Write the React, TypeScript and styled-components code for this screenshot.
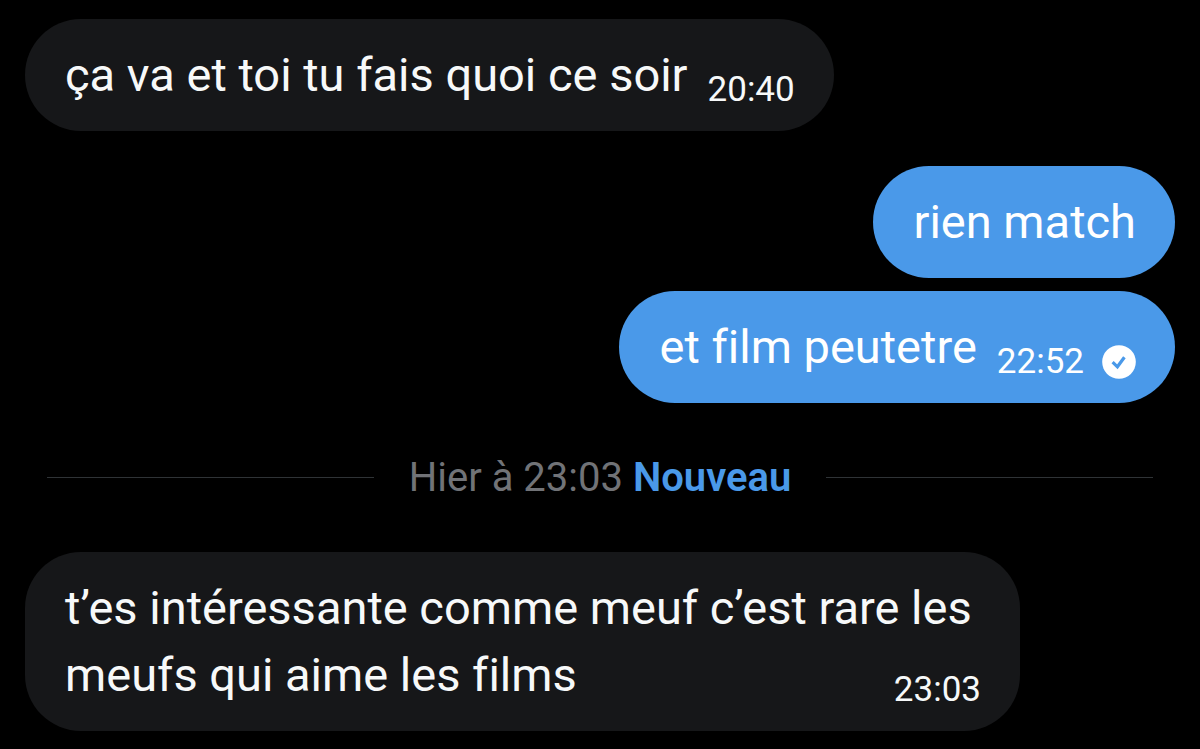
import React from 'react';
import styled, { createGlobalStyle } from 'styled-components';

const GlobalStyle = createGlobalStyle`
  *, *::before, *::after {
    box-sizing: border-box;
  }

  body {
    margin: 0;
    background: #000000;
    color: #f7f9f9;
    font-family: Roboto, 'Liberation Sans', sans-serif;
    font-variant-ligatures: none;
  }
`;

const Conversation = styled.main`
  padding: 19px 25px 18px;
`;

const MessageGroup = styled.ol<{ $outgoing?: boolean }>`
  display: flex;
  flex-direction: column;
  align-items: ${({ $outgoing }) => ($outgoing ? 'flex-end' : 'flex-start')};
  gap: 13px;
  margin: 0;
  padding: 0;
  list-style: none;

  & + & {
    margin-top: 35px;
  }
`;

const Bubble = styled.li<{ $outgoing?: boolean }>`
  display: flow-root;
  max-width: calc(100% - 155px);
  padding: 22px 39px 23px 40px;
  border-radius: 56px;
  background: ${({ $outgoing }) => ($outgoing ? '#4a99e9' : '#161719')};
  color: ${({ $outgoing }) => ($outgoing ? '#ffffff' : '#f7f9f9')};
  font-size: 47px;
  line-height: 67px;
`;

const Meta = styled.span`
  float: right;
  display: flex;
  align-items: flex-end;
  gap: 18px;
  height: 67px;
  margin-left: 20px;
  padding-bottom: 1px;
`;

const Time = styled.time`
  font-size: 35px;
  line-height: 35px;
`;

const SentIcon = styled.svg`
  display: block;
  width: 34px;
  height: 34px;
`;

const Divider = styled.div`
  display: flex;
  align-items: center;
  gap: 35px;
  margin: 50px 22px;
  font-size: 40px;
  line-height: 49px;

  &::before,
  &::after {
    content: '';
    flex: 1;
    height: 1px;
    background: #2f3336;
  }
`;

const DividerText = styled.p`
  margin: 0;
  color: #717377;
`;

const NewLabel = styled.strong`
  color: #4a99e9;
  font-weight: 600;
`;

type Message = { text: string; time?: string; sent?: boolean };

function Messages({ items, outgoing }: { items: Message[]; outgoing?: boolean }) {
  return (
    <MessageGroup $outgoing={outgoing}>
      {items.map(({ text, time, sent }) => (
        <Bubble key={text} $outgoing={outgoing}>
          {text}
          {time && (
            <Meta>
              <Time>{time}</Time>
              {sent && (
                <SentIcon viewBox="0 0 34 34" aria-hidden="true">
                  <circle cx="17" cy="17" r="16.8" fill="#ffffff" />
                  <path d="M10.6 17.2l4.8 4.6 7-9.6" fill="none" stroke="#4a99e9" strokeWidth="3.2" />
                </SentIcon>
              )}
            </Meta>
          )}
        </Bubble>
      ))}
    </MessageGroup>
  );
}

export default function App() {
  return (
    <>
      <GlobalStyle />
      <Conversation>
        <Messages items={[{ text: 'ça va et toi tu fais quoi ce soir', time: '20:40' }]} />
        <Messages
          outgoing
          items={[{ text: 'rien match' }, { text: 'et film peutetre', time: '22:52', sent: true }]}
        />
        <Divider>
          <DividerText>
            Hier à 23:03 <NewLabel>Nouveau</NewLabel>
          </DividerText>
        </Divider>
        <Messages
          items={[{ text: 't’es intéressante comme meuf c’est rare les meufs qui aime les films', time: '23:03' }]}
        />
      </Conversation>
    </>
  );
}
